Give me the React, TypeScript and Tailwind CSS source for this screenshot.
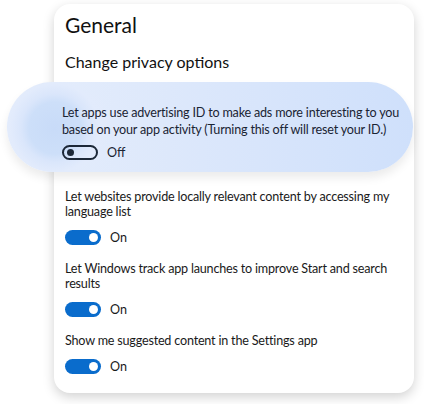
import React from "react"

type Option = {
  label: string
  on: boolean
}

const options: Option[] = [
  { label: "Let websites provide locally relevant content by accessing my language list", on: true },
  { label: "Let Windows track app launches to improve Start and search results", on: true },
  { label: "Show me suggested content in the Settings app", on: true },
]

function Toggle({ on }: { on: boolean }) {
  if (on) {
    return (
      <div className="flex h-[15px] w-[36px] items-center justify-end rounded-full bg-[#0a6ccc] pr-[3px]">
        <div className="h-[9px] w-[9px] rounded-full bg-white" />
      </div>
    )
  }
  return (
    <div className="flex h-[15px] w-[36px] items-center rounded-full border-2 border-[#1c2838] pl-[3px]">
      <div className="h-[7px] w-[7px] rounded-full bg-[#1c2838]" />
    </div>
  )
}

function Setting({ label, on, first }: Option & { first?: boolean }) {
  return (
    <div className={first ? "mt-[17px] pr-[10px]" : "mt-[16px] pr-[10px]"}>
      <p className="text-[12.6px] leading-[15px] tracking-[-0.2px] text-[#1a1a1a]">{label}</p>
      <div className="mt-[11px] flex items-center gap-[9px]">
        <Toggle on={on} />
        <span className="text-[12.6px] leading-[15px] text-[#1a1a1a]">{on ? "On" : "Off"}</span>
      </div>
    </div>
  )
}

export default function App() {
  return (
    <div
      className="h-[404px] w-[424px] overflow-hidden bg-white pl-[54px] pt-[4px]"
      style={{ fontFamily: 'Lato, "Noto Sans", sans-serif' }}
    >
      <div className="h-[389px] w-[360px] rounded-[16px] bg-white pl-[11px] shadow-[0_4px_12px_rgba(0,0,0,0.18)]">
        <h1 className="pt-[7px] text-[21px] leading-[28px] text-[#111]">General</h1>
        <h2 className="mt-[13px] text-[16px] leading-[20px] text-[#111]">Change privacy options</h2>

        <div className="-ml-[58px] mt-[10px] h-[90px] w-[406px] rounded-[46px] bg-[radial-gradient(circle_at_48px_46px,#c8dbf8_0px,#cddff9_26px,#dae6fb_34px,#e2ebfc_44px,rgba(226,235,252,0)_56px),linear-gradient(90deg,#e6eefc_0%,#dde8fb_40%,#cfe0fb_100%)] pl-[55px] pr-[2px] pt-[22px] shadow-[0_6px_10px_rgba(0,0,0,0.08)]">
          <p className="text-[12.6px] leading-[17px] tracking-[-0.2px] text-[#1a2433]">
            Let apps use advertising ID to make ads more interesting to you based on your app activity (Turning this off will reset your ID.)
          </p>
          <div className="mt-[7px] flex items-center gap-[9px]">
            <Toggle on={false} />
            <span className="text-[12.6px] leading-[15px] text-[#1a2433]">Off</span>
          </div>
        </div>

        {options.map((o, i) => (
          <Setting key={o.label} {...o} first={i === 0} />
        ))}
      </div>
    </div>
  )
}
